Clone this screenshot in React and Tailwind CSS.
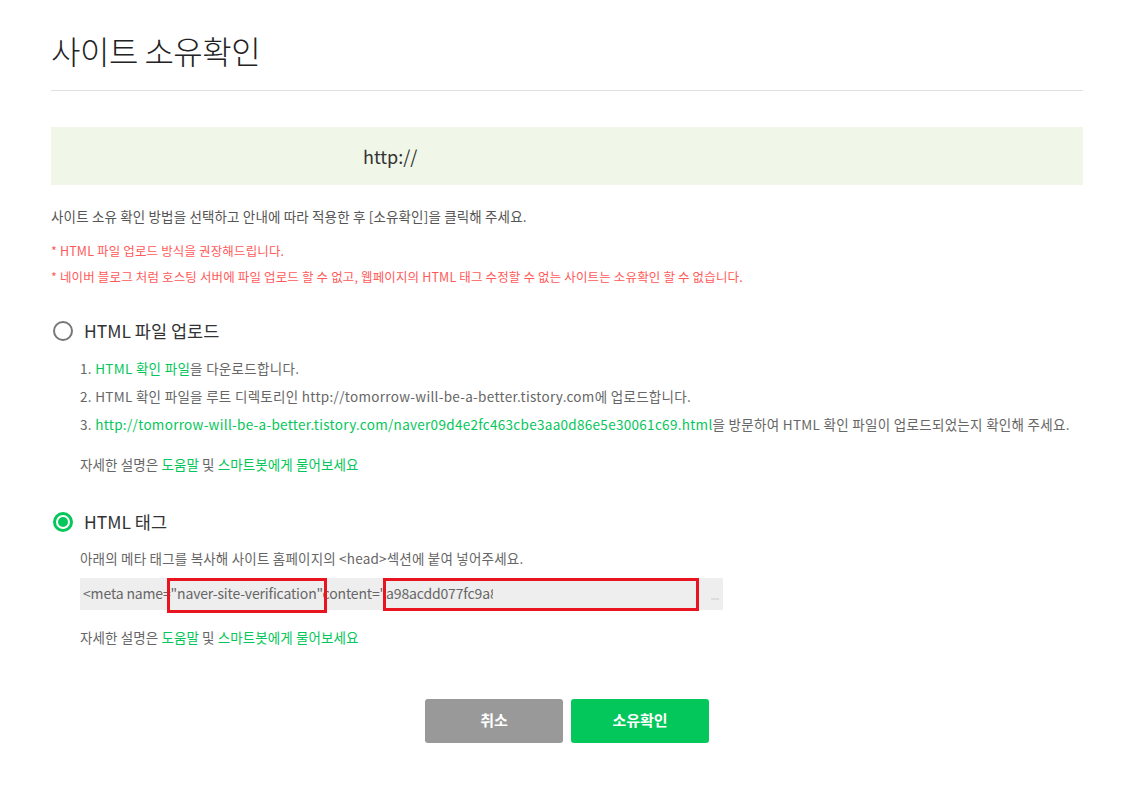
import React from 'react';

const font = { fontFamily: '"Noto Sans CJK KR", "Noto Sans", sans-serif' };

const Help = ({ className }) => (
  <p className={`text-[13.5px] text-[#666] tracking-[0.1px] ${className}`}>
    자세한 설명은 <span className="text-[#03c75a]">도움말</span> 및{' '}
    <span className="text-[#03c75a]">스마트봇에게 물어보세요</span>
  </p>
);

const Radio = ({ checked }) =>
  checked ? (
    <span className="w-[20px] h-[20px] rounded-full border-[3px] border-[#03c75a] flex items-center justify-center">
      <span className="w-[10px] h-[10px] rounded-full bg-[#03c75a]" />
    </span>
  ) : (
    <span className="w-[20px] h-[20px] rounded-full border-2 border-[#777]" />
  );

export default function App() {
  return (
    <div className="w-[1122px] min-h-[810px] bg-white pl-[51px] pr-[39px] pt-[28px]" style={font}>
      {/* Title */}
      <h1 className="text-[32px] font-light leading-[44px] text-[#222] tracking-[-0.5px]">사이트 소유확인</h1>
      <div className="mt-[18px] h-px bg-[#e0e0e0]" />

      {/* URL box */}
      <div className="mt-[36px] h-[58px] bg-[#f0f6e8] flex items-center pl-[312px]">
        <span className="text-[18px] text-[#333]">http://</span>
      </div>

      {/* Description */}
      <p className="mt-[20px] text-[13.5px] text-[#555] leading-[22px] tracking-[0.15px]">
        사이트 소유 확인 방법을 선택하고 안내에 따라 적용한 후 [소유확인]을 클릭해 주세요.
      </p>
      <div className="mt-[11px] text-[12.5px] text-[#ff5a5a] leading-[26px] tracking-[0.15px]">
        <p>* HTML 파일 업로드 방식을 권장해드립니다.</p>
        <p>* 네이버 블로그 처럼 호스팅 서버에 파일 업로드 할 수 없고, 웹페이지의 HTML 태그 수정할 수 없는 사이트는 소유확인 할 수 없습니다.</p>
      </div>

      {/* Option 1 */}
      <div className="mt-[28px] flex items-center gap-[11px] pl-[2px]">
        <Radio />
        <span className="text-[17.5px] text-[#333]">HTML 파일 업로드</span>
      </div>
      <div className="pl-[29px] mt-[10px] text-[13.5px] text-[#666] leading-[28px] tracking-[0.3px] whitespace-nowrap">
        <p>
          1. <span className="text-[#03c75a]">HTML 확인 파일</span>을 다운로드합니다.
        </p>
        <p>2. HTML 확인 파일을 루트 디렉토리인 http://tomorrow-will-be-a-better.tistory.com에 업로드합니다.</p>
        <p>
          3.{' '}
          <span className="text-[#03c75a]">
            http://tomorrow-will-be-a-better.tistory.com/naver09d4e2fc463cbe3aa0d86e5e30061c69.html
          </span>
          을 방문하여 HTML 확인 파일이 업로드되었는지 확인해 주세요.
        </p>
        <Help className="mt-[12px] leading-[28px]" />
      </div>

      {/* Option 2 */}
      <div className="mt-[31px] flex items-center gap-[11px] pl-[2px]">
        <Radio checked />
        <span className="text-[17.5px] text-[#333]">HTML 태그</span>
      </div>
      <div className="pl-[29px] mt-[11px]">
        <p className="text-[13.5px] text-[#666] leading-[22px] tracking-[0.2px]">
          아래의 메타 태그를 복사해 사이트 홈페이지의 &lt;head&gt;섹션에 붙여 넣어주세요.
        </p>
        <div className="relative mt-[9px] w-[643px] h-[32px] bg-[#eeeeee] flex items-center pl-[3px] text-[14px] text-[#666] whitespace-nowrap tracking-[-0.15px]">
          <span className="w-[410px] overflow-hidden">
            &lt;meta name="naver-site-verification"content="a98acdd077fc9a8b2e3d1"
          </span>
          <span className="absolute right-[4px] bottom-[10px] w-[8px] h-[2px] bg-[#ddd]" />
          <span className="absolute left-[87px] top-0 w-[160px] h-[35px] border-[3px] border-[#e8141f]" />
          <span className="absolute left-[303px] top-0 w-[316px] h-[33px] border-[3px] border-[#e8141f]" />
        </div>
        <Help className="mt-[16px] leading-[22px]" />
      </div>

      {/* Buttons */}
      <div className="mt-[51px] flex justify-center gap-[8px]">
        <button className="w-[138px] h-[44px] rounded-[3px] bg-[#999999] text-white text-[15px] font-bold">
          취소
        </button>
        <button className="w-[138px] h-[44px] rounded-[3px] bg-[#03c75a] text-white text-[15px] font-bold">
          소유확인
        </button>
      </div>
    </div>
  );
}
